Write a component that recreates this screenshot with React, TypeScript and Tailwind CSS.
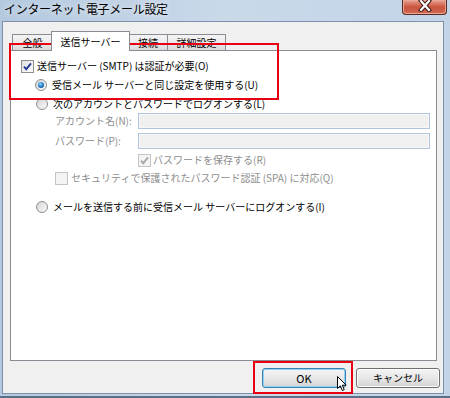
import React from 'react';

const FONT = "font-['Noto_Sans_CJK_JP','Noto_Sans',sans-serif]";

function Checkbox({ checked, disabled }: { checked?: boolean; disabled?: boolean }) {
  return (
    <span
      className={`inline-flex w-[13px] h-[13px] shrink-0 items-center justify-center border ${
        disabled
          ? 'border-[#c4c4c4] bg-[#f4f4f4]'
          : 'border-[#8e8f8f] bg-gradient-to-br from-[#dedede] to-[#ffffff]'
      }`}
    >
      {checked && (
        <svg width="11" height="11" viewBox="0 0 11 11">
          <path
            d="M2 5.6 L4.3 8.2 L9 2.4"
            fill="none"
            stroke={disabled ? '#a9a9a9' : '#23399a'}
            strokeWidth="1.9"
          />
        </svg>
      )}
    </span>
  );
}

function Radio({ checked }: { checked?: boolean }) {
  return (
    <span className="inline-flex w-[12px] h-[12px] shrink-0 items-center justify-center rounded-full border border-[#8e8f8f] bg-gradient-to-br from-[#d4d4d4] to-[#fbfbfb]">
      {checked && (
        <span className="w-[6px] h-[6px] rounded-full bg-[radial-gradient(circle_at_40%_35%,#8fdcff,#1a6fc2_55%,#0b3a78)]" />
      )}
    </span>
  );
}

function Tab({ label, active, className = '' }: { label: string; active?: boolean; className?: string }) {
  return (
    <div
      className={`flex items-center justify-center border border-[#898c95] text-[10px] leading-none text-black ${
        active
          ? 'relative z-10 h-[20px] border-b-0 bg-white'
          : 'h-[16px] mb-[1px] border-b-0 bg-gradient-to-b from-[#f4f4f4] via-[#ebebeb] to-[#d9d9d9]'
      } ${className}`}
    >
      {label}
    </div>
  );
}

function Field() {
  return <div className="w-[292px] h-[16px] border border-[#b3c5dc] bg-[#f0f0f0] shadow-[inset_0_0_0_1px_#f7f7f7]" />;
}

export default function App() {
  return (
    <div className={`${FONT} relative w-[450px] h-[398px] overflow-hidden flex flex-col bg-gradient-to-r from-[#b4c9df] via-[#cad9ea] to-[#c3d4e7]`}>
      {/* title bar */}
      <div className="h-[22px] flex items-start justify-between pl-[4px] pr-[3px]">
        <span className="mt-[3px] text-[12px] leading-none tracking-[-0.3px] text-black [text-shadow:0_0_6px_#ffffff]">
          インターネット電子メール設定
        </span>
        <div className="w-[45px] h-[15px] flex items-center justify-center rounded-b-[4px] border border-t-0 border-[#5a2a22] bg-gradient-to-b from-[#e9a293] via-[#c9543f] to-[#d46a52] shadow-[inset_0_0_0_1px_#e8a898]">
          <svg width="14" height="13" viewBox="0 0 14 13" className="-mt-[4px]">
            <path d="M3 2 L11 11 M11 2 L3 11" stroke="#3a1a16" strokeWidth="4.2" strokeLinecap="square" />
            <path d="M3 2 L11 11 M11 2 L3 11" stroke="#ffffff" strokeWidth="2.2" strokeLinecap="square" />
          </svg>
        </div>
      </div>

      {/* client area */}
      <div className="h-[371px] ml-[3px] mr-[7px] flex flex-col bg-[#f0f0f0] shadow-[0_0_0_1px_#7d91a8]">
        {/* tabs */}
        <div className="h-[29px] -mb-[1px] flex items-end pl-[9px]">
          <Tab label="全般" className="w-[41px]" />
          <Tab label="送信サーバー" active className="w-[79px] -ml-[2px]" />
          <Tab label="接続" className="w-[40px] -ml-[2px]" />
          <Tab label="詳細設定" className="w-[59px] -ml-[1px]" />
        </div>

        {/* panel */}
        <div className="h-[311px] ml-[7px] mr-[6px] flex flex-col border border-[#898c95] bg-white pt-[6px] text-[10px] leading-none">
          <div className="h-[18px] flex items-center gap-[3px] pl-[10px] text-black">
            <Checkbox checked />
            <span>送信サーバー (SMTP) は認証が必要(O)</span>
          </div>
          <div className="mt-[1px] h-[18px] flex items-center gap-[5px] pl-[24px] text-black">
            <Radio checked />
            <span>受信メール サーバーと同じ設定を使用する(U)</span>
          </div>
          <div className="mt-[1px] h-[18px] flex items-center gap-[5px] pl-[25px] text-black">
            <Radio />
            <span>次のアカウントとパスワードでログオンする(L)</span>
          </div>
          <div className="h-[16px] flex items-center pl-[44px] text-[#8d8d8d]">
            <span className="w-[83px]">アカウント名(N):</span>
            <Field />
          </div>
          <div className="mt-[4px] h-[16px] flex items-center pl-[44px] text-[#8d8d8d]">
            <span className="w-[83px]">パスワード(P):</span>
            <Field />
          </div>
          <div className="mt-[2px] h-[18px] flex items-center gap-[2px] pl-[127px] text-[#8d8d8d]">
            <Checkbox checked disabled />
            <span>パスワードを保存する(R)</span>
          </div>
          <div className="h-[18px] flex items-center gap-[3px] pl-[44px] text-[#8d8d8d]">
            <Checkbox disabled />
            <span>セキュリティで保護されたパスワード認証 (SPA) に対応(Q)</span>
          </div>
          <div className="mt-[11px] h-[18px] flex items-center gap-[5px] pl-[25px] text-black">
            <Radio />
            <span>メールを送信する前に受信メール サーバーにログオンする(I)</span>
          </div>
        </div>

        {/* buttons */}
        <div className="mt-[7px] flex justify-end gap-[10px] pr-[3px]">
          <button className="w-[84px] h-[20px] flex items-center justify-center rounded-[3px] border border-[#3c7fb1] bg-gradient-to-b from-[#f4f4f4] via-[#e8e8e8] to-[#d4d4d4] shadow-[inset_0_0_0_1px_#8fd3f5] text-[11px] leading-none text-black">
            OK
          </button>
          <button className="w-[84px] h-[20px] flex items-center justify-center rounded-[3px] border border-[#707070] bg-gradient-to-b from-[#f4f4f4] via-[#e8e8e8] to-[#d2d2d2] shadow-[inset_0_0_0_1px_#fcfcfc] text-[10px] leading-none text-black">
            キャンセル
          </button>
        </div>
      </div>

      {/* bottom frame */}
      <div className="flex-1 mt-[1px] border-b-[2px] border-[#5b6f86]" />

      {/* red highlight boxes */}
      <div className="absolute left-[9px] top-[43px] w-[270px] h-[57px] border-[2px] border-[#e60012]" />
      <div className="absolute left-[253px] top-[361px] w-[100px] h-[33px] border-[2px] border-[#e60012]" />

      {/* mouse cursor */}
      <svg className="absolute left-[337px] top-[376px]" width="11" height="16" viewBox="0 0 11 16">
        <path d="M0.5 0.5 L0.5 12.5 L3.3 9.8 L5.3 14.5 L7.2 13.7 L5.3 9.2 L9.2 9.2 Z" fill="#ffffff" stroke="#000000" strokeWidth="1" strokeLinejoin="round" />
      </svg>
    </div>
  );
}
